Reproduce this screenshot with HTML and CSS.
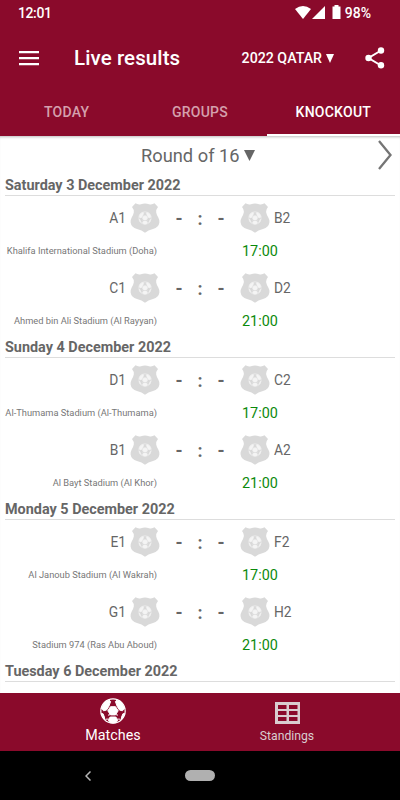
FILE: index.html
```html
<!DOCTYPE html>
<html lang="en">
<head>
    <meta charset="UTF-8">
    <meta name="viewport" content="width=device-width, initial-scale=1.0">
    <title>Live results</title>
    <link rel="stylesheet" href="styles.css">
</head>
<body>
    <svg class="symbols">
        <symbol id="ball" viewBox="0 0 26 26">
            <circle cx="13" cy="13" r="12.2" fill="none" stroke="currentColor" stroke-width="1.2"/>
            <g fill="currentColor" stroke="currentColor" stroke-width="1" stroke-linejoin="round">
                <path d="M10.500 8.700h5l2.700 4.100-2.700 4.100h-5l-2.700-4.100z"/>
                <path d="M8.900 8.300L6.600 12 3.600 12.800 1.300 10.500 4.300 4.600 8.900 1.900 10.600 3.500z"/>
                <path d="M17.100 8.300L19.400 12l3 .8 2.300-2.300-3-5.900-4.600-2.700-1.700 1.600z"/>
                <path d="M10.200 19h5.600l2 2.700-1.500 2.800Q13 25.600 9.700 24.500l-1.500-2.800z"/>
                <path d="M1.500 15.500l1.600.3 1.300 3.200.2 2.500Q2 18.500 1.500 15.500z"/>
                <path d="M24.500 15.500l-1.600.3-1.300 3.200-.2 2.500Q24 18.500 24.500 15.500z"/>
            </g>
            <path d="M8 17.200l2.200-.6M7.800 21l-2.500.3M18 17.200l-2.200-.6M18.200 21l2.500.3" stroke="currentColor" stroke-width="1"/>
        </symbol>
        <symbol id="crest" viewBox="0 0 30 30">
            <path fill="#d9d9d9" d="M5.500 0.300Q8 2 11 1.200Q15 0 19 1.200Q22 2 24.500 0.300L28 4Q25.800 6.500 26.200 9.500Q26.700 12 28.300 14.500Q29.700 17 29.400 19.500Q28.800 24.300 23 26Q18 27.300 15 29.800Q12 27.300 7 26Q1.200 24.300 0.600 19.500Q0.300 17 1.700 14.500Q3.300 12 3.800 9.500Q4.200 6.500 2 4z"/>
            <use href="#ball" x="8.300" y="8.300" width="13.400" height="13.400" color="#f4f4f4"/>
        </symbol>
    </svg>

    <header class="top">
        <div class="status">
            <span class="clock">12:01</span>
            <svg class="status-icons" width="48" height="16" viewBox="0 0 48 16" fill="#fff">
                <path d="M0 4Q8 -2 16 4L8 14z"/>
                <path d="M30 1v13H17z"/>
                <path d="M37.500 1.500h2V0h4v1.500h2V14h-8z"/>
            </svg>
            <span class="battery">98%</span>
        </div>
        <div class="toolbar">
            <svg class="menu" width="20" height="15" viewBox="0 0 20 15" fill="#fff">
                <path d="M0 0h20v2.300H0zM0 6h20v2.300H0zM0 12h20v2.300H0z"/>
            </svg>
            <h1>Live results</h1>
            <span class="season">2022 QATAR</span>
            <svg class="season-arrow" width="8" height="9" viewBox="0 0 8 9" fill="#fff"><path d="M0 0h8L4 9z"/></svg>
            <svg class="share" width="20" height="22" viewBox="0 0 20 22">
                <path d="M16 3.500L3.500 11 16 18.500" fill="none" stroke="#fff" stroke-width="2"/>
                <g fill="#fff">
                    <circle cx="16" cy="3.500" r="3.200"/>
                    <circle cx="3.500" cy="11" r="3.200"/>
                    <circle cx="16" cy="18.300" r="3.200"/>
                </g>
            </svg>
        </div>
        <nav class="tabs">
            <a class="tab">TODAY</a>
            <a class="tab">GROUPS</a>
            <a class="tab active">KNOCKOUT</a>
        </nav>
    </header>

    <main class="content">
        <div class="round">
            <span>Round of 16</span>
            <svg class="round-arrow" width="11" height="11" viewBox="0 0 11 11" fill="#666"><path d="M0 0h11L5.500 11z"/></svg>
            <svg class="next" width="14" height="30" viewBox="0 0 14 30" fill="none" stroke="#757575" stroke-width="2.300"><path d="M1 1l11.500 14L1 29"/></svg>
        </div>

        <section class="day">
            <h2>Saturday 3 December 2022</h2>
            <div class="match">
                <span class="home">A1</span>
                <svg class="crest"><use href="#crest"/></svg>
                <span class="score"><i>-</i><i>:</i><i>-</i></span>
                <svg class="crest"><use href="#crest"/></svg>
                <span class="away">B2</span>
                <span class="venue">Khalifa International Stadium (Doha)</span>
                <span class="time">17:00</span>
            </div>
            <div class="match">
                <span class="home">C1</span>
                <svg class="crest"><use href="#crest"/></svg>
                <span class="score"><i>-</i><i>:</i><i>-</i></span>
                <svg class="crest"><use href="#crest"/></svg>
                <span class="away">D2</span>
                <span class="venue">Ahmed bin Ali Stadium (Al Rayyan)</span>
                <span class="time">21:00</span>
            </div>
        </section>

        <section class="day">
            <h2>Sunday 4 December 2022</h2>
            <div class="match">
                <span class="home">D1</span>
                <svg class="crest"><use href="#crest"/></svg>
                <span class="score"><i>-</i><i>:</i><i>-</i></span>
                <svg class="crest"><use href="#crest"/></svg>
                <span class="away">C2</span>
                <span class="venue">Al-Thumama Stadium (Al-Thumama)</span>
                <span class="time">17:00</span>
            </div>
            <div class="match">
                <span class="home">B1</span>
                <svg class="crest"><use href="#crest"/></svg>
                <span class="score"><i>-</i><i>:</i><i>-</i></span>
                <svg class="crest"><use href="#crest"/></svg>
                <span class="away">A2</span>
                <span class="venue">Al Bayt Stadium (Al Khor)</span>
                <span class="time">21:00</span>
            </div>
        </section>

        <section class="day">
            <h2>Monday 5 December 2022</h2>
            <div class="match">
                <span class="home">E1</span>
                <svg class="crest"><use href="#crest"/></svg>
                <span class="score"><i>-</i><i>:</i><i>-</i></span>
                <svg class="crest"><use href="#crest"/></svg>
                <span class="away">F2</span>
                <span class="venue">Al Janoub Stadium (Al Wakrah)</span>
                <span class="time">17:00</span>
            </div>
            <div class="match">
                <span class="home">G1</span>
                <svg class="crest"><use href="#crest"/></svg>
                <span class="score"><i>-</i><i>:</i><i>-</i></span>
                <svg class="crest"><use href="#crest"/></svg>
                <span class="away">H2</span>
                <span class="venue">Stadium 974 (Ras Abu Aboud)</span>
                <span class="time">21:00</span>
            </div>
        </section>

        <section class="day">
            <h2>Tuesday 6 December 2022</h2>
        </section>
    </main>

    <nav class="bottom-nav">
        <a class="item selected">
            <svg width="26" height="26"><use href="#ball"/></svg>
            <span>Matches</span>
        </a>
        <a class="item">
            <svg width="25" height="22" viewBox="0 0 25 22">
                <path fill="#d9cdd0" fill-rule="evenodd" d="M0 0h25v22H0zM3 3v4h8.500V3zM14 3v4h8.500V3zM3 9v4h8.500V9zM14 9v4h8.500V9zM3 15v4h8.500v-4zM14 15v4h8.500v-4z"/>
            </svg>
            <span>Standings</span>
        </a>
    </nav>

    <footer class="system-bar">
        <svg class="back" width="6" height="10" viewBox="0 0 6 10" fill="none" stroke="#b5b5b5" stroke-width="1.500"><path d="M5.500 0.500L1 5l4.500 4.500"/></svg>
        <span class="pill"></span>
    </footer>
</body>
</html>
```
FILE: styles.css
```css
* {
    box-sizing: border-box;
}
body {
    margin: 0;
    width: 400px;
    height: 800px;
    overflow: hidden;
    display: flex;
    flex-direction: column;
    font-family: Roboto, sans-serif;
    background: #fff;
    color: #666;
}
svg {
    display: block;
    flex: none;
}
.symbols {
    display: none;
}
.top {
    height: 136px;
    background: #8a0a2b;
    color: #fff;
    flex: none;
}
.status {
    display: flex;
    align-items: center;
    height: 25px;
    padding: 0 29px 0 18px;
    font-size: 14px;
    font-weight: 500;
}
.clock {
    flex: 1;
    letter-spacing: -0.4px;
}
.status-icons {
    margin-right: 2px;
}
.toolbar {
    display: flex;
    align-items: center;
    height: 66px;
    padding: 0 15px 0 19px;
}
h1 {
    flex: 1;
    margin: 0 0 0 35px;
    font-size: 20.5px;
    font-weight: 500;
    letter-spacing: 0.1px;
}
.season {
    font-size: 14.2px;
    font-weight: 500;
}
.season-arrow {
    margin: 0 31px 0 4px;
}
.tabs {
    display: flex;
    height: 45px;
}
.tab {
    flex: 1;
    text-align: center;
    font-size: 14px;
    font-weight: 500;
    letter-spacing: 0.25px;
    line-height: 42px;
    color: #d5a0ad;
}
.tab.active {
    color: #fff;
    border-bottom: 2px solid #fff;
}
.content {
    height: 557px;
    overflow: hidden;
    box-shadow: inset 0 3px 3px -2px #bbb;
}
.round {
    display: flex;
    align-items: center;
    height: 38px;
    padding: 0 8px 0 141px;
    font-size: 18.3px;
}
.round-arrow {
    margin-left: 4px;
}
.next {
    margin-left: auto;
}
h2 {
    height: 22px;
    margin: 0 5px;
    border-bottom: 1px solid #ddd;
    font-size: 14.4px;
    font-weight: 700;
    line-height: 23px;
}
.match {
    display: grid;
    grid-template-columns: 126px 30px 72px 30px 1fr;
    grid-template-rows: 44px 22px;
    column-gap: 4px;
    height: 70px;
    align-items: center;
    font-size: 13.8px;
}
.home {
    text-align: right;
}
.crest {
    width: 30px;
    height: 30px;
}
.score {
    display: flex;
    justify-content: center;
    font-size: 18px;
    font-weight: 700;
}
.score i {
    width: 21px;
    text-align: center;
    font-style: normal;
}
.venue {
    grid-column: 1 / 3;
    padding-right: 3px;
    text-align: right;
    font-size: 9.3px;
    line-height: 12px;
    margin-top: -1px;
    white-space: nowrap;
    color: #777;
}
.time {
    grid-column: 4 / 6;
    padding-left: 2px;
    font-size: 14.4px;
    color: #0b8a0b;
}
.bottom-nav {
    display: flex;
    justify-content: center;
    height: 58px;
    background: #8a0a2b;
}
.item {
    display: flex;
    flex-direction: column;
    align-items: center;
    justify-content: flex-end;
    width: 174px;
    padding-bottom: 8px;
    gap: 5px;
    font-size: 12.2px;
    color: #d9cdd0;
}
.item.selected {
    font-size: 14.3px;
    gap: 3px;
    color: #fff;
}
.system-bar {
    display: flex;
    align-items: center;
    height: 49px;
    padding-left: 85px;
    background: #000;
}
.pill {
    width: 30px;
    height: 11px;
    margin-left: 94px;
    border-radius: 6px;
    background: #b0b0b0;
}
```
